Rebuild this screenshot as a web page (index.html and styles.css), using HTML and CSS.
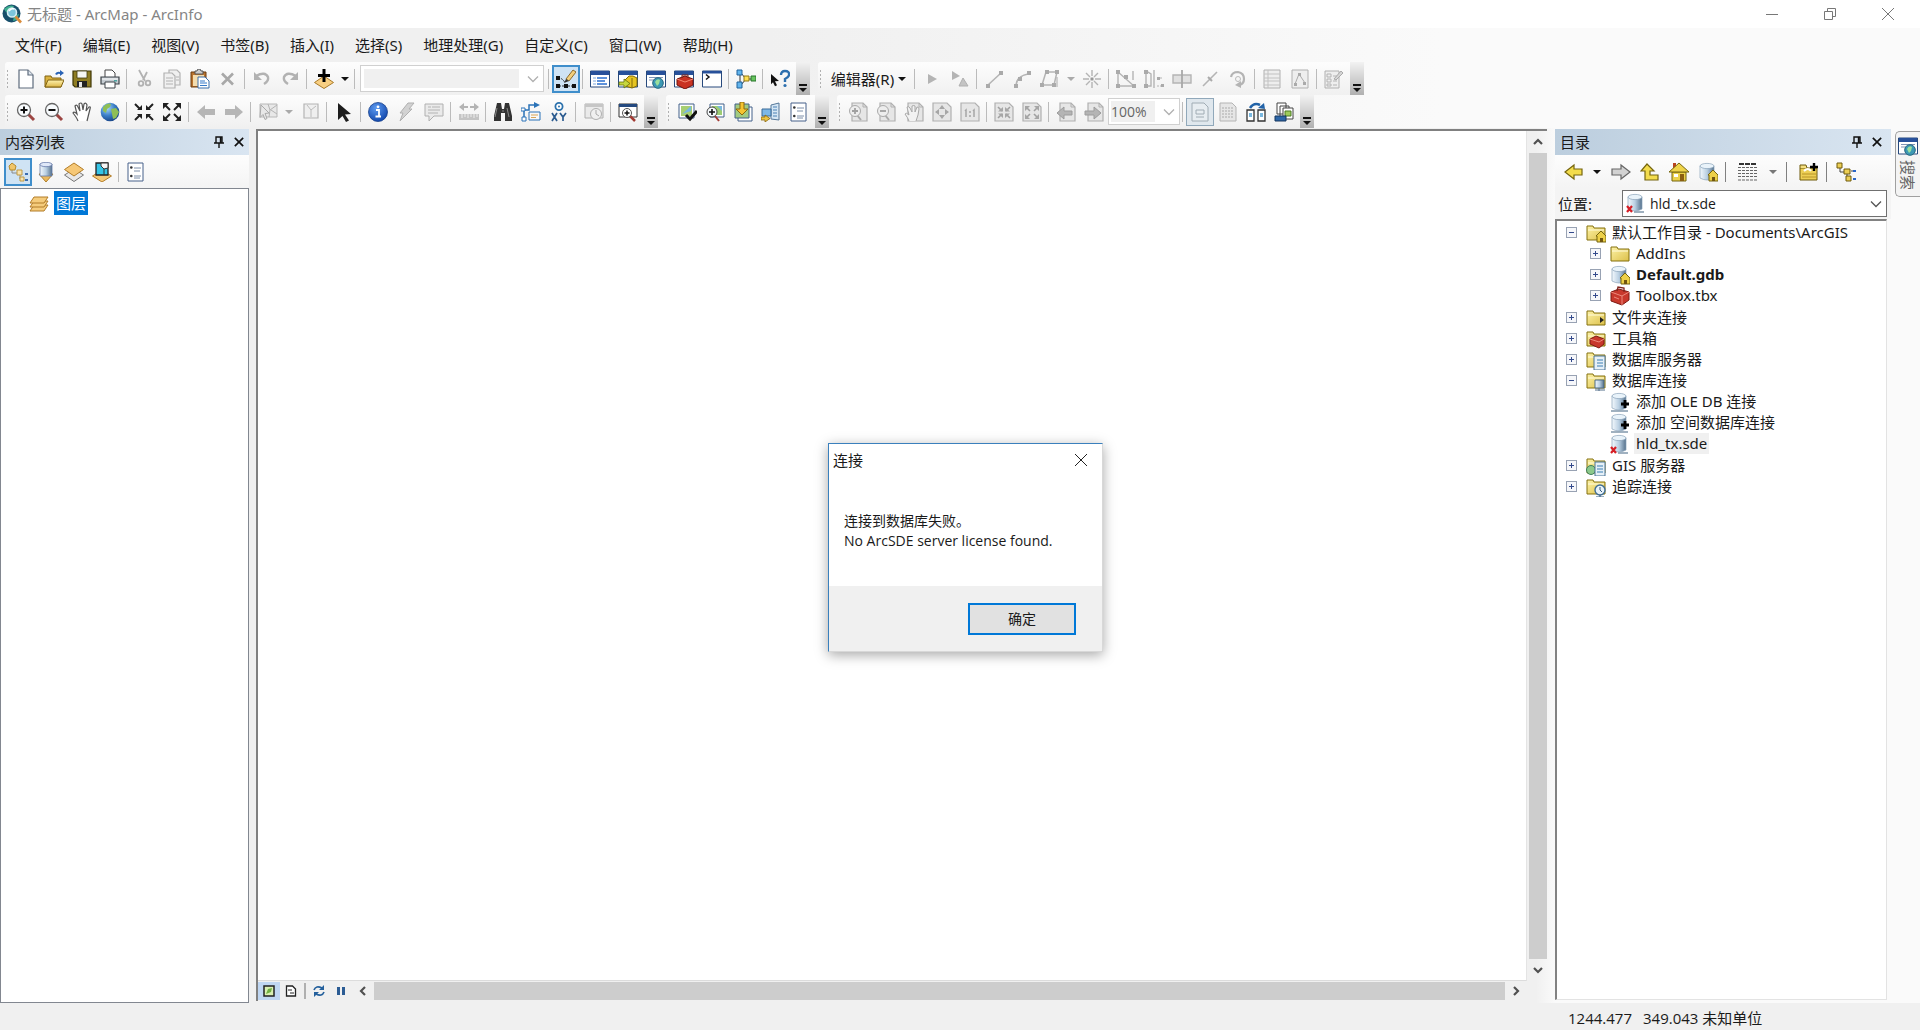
FILE: index.html
```html
<!DOCTYPE html>
<html lang="zh-CN">
<head>
<meta charset="utf-8">
<title>无标题 - ArcMap - ArcInfo</title>
<link rel="stylesheet" href="styles.css">
</head>
<body>
<svg class="sprite" aria-hidden="true">
  <defs>
    <linearGradient id="g-cyl" x1="0" x2="1" y1="0" y2="0"><stop offset="0" stop-color="#f4f9fd"/><stop offset=".5" stop-color="#b9cfe2"/><stop offset="1" stop-color="#55718c"/></linearGradient>
    <linearGradient id="g-fold" x1="0" x2="0" y1="0" y2="1"><stop offset="0" stop-color="#fff3b0"/><stop offset="1" stop-color="#dcb545"/></linearGradient>
    <linearGradient id="g-folder" x1="0" x2="1" y1="0" y2="1"><stop offset="0" stop-color="#fdf2a6"/><stop offset="1" stop-color="#dcc04a"/></linearGradient>
    <radialGradient id="g-globe" cx=".35" cy=".3" r=".8"><stop offset="0" stop-color="#a9d8f8"/><stop offset=".5" stop-color="#3b7fc8"/><stop offset="1" stop-color="#123a7c"/></radialGradient>
    <radialGradient id="g-info" cx=".4" cy=".3" r=".8"><stop offset="0" stop-color="#5c9af0"/><stop offset="1" stop-color="#0a3fa6"/></radialGradient>
  </defs>
  <symbol id="app" viewBox="0 0 20 20"><circle cx="9.500" cy="9.500" r="9" fill="#174f6b"/><path d="M2 5q5-5 10-3l-3 5-5 1zM12 12l5-2-2 6-4 1z" fill="#3fae8e"/><circle cx="10" cy="8.500" r="4.500" fill="#7cc6dc" stroke="#d4eef4" stroke-width="1.600"/><path d="M7 7q2-3 5-2" stroke="#fff" stroke-width="1.500" fill="none"/><path d="M13.500 12.500l5.500 6" stroke="#d98b3a" stroke-width="2.600"/></symbol>
  <symbol id="new" viewBox="0 0 20 20"><path d="M3 1h9l5 5v13H3z" fill="#fff" stroke="#5d6b7c" stroke-width="1.200"/><path d="M12 1v5h5" fill="#dfe6ee" stroke="#5d6b7c" stroke-width="1.200"/></symbol>
  <symbol id="open" viewBox="0 0 20 20"><path d="M1 18V7h6l1 2h9v9z" fill="#d9b13f" stroke="#806212"/><path d="M1 18l3-7h16l-3 7z" fill="url(#g-fold)" stroke="#806212"/><path d="M11 5q2-3 5-2V1l4 3-4 3V5q-2-1-3 1z" fill="#2a63b5"/></symbol>
  <symbol id="save" viewBox="0 0 20 20"><path d="M1 2h18v16H3l-2-2z" fill="#8f7d22" stroke="#3f3708" stroke-width="1.200"/><path d="M5 2h10v7H5z" fill="#f6f6f2" stroke="#3f3708" stroke-width=".8"/><path d="M5 12h10v6H5z" fill="#222"/><path d="M7 13h3v5H7z" fill="#e6e6e6"/></symbol>
  <symbol id="print" viewBox="0 0 20 20"><path d="M5 8V1h7l3 3v4" fill="#fff" stroke="#444"/><path d="M1 8h18v7H1z" fill="#c5ccd2" stroke="#3d4348" stroke-width="1.200"/><path d="M2 10h16" stroke="#fff"/><path d="M5 13h10v6H5z" fill="#fff" stroke="#3d4348"/><path d="M14 11h3v1.500h-3z" fill="#4aa3a0"/></symbol>
  <symbol id="cut" viewBox="0 0 20 20"><g fill="none" stroke="#b2b2b2" stroke-width="1.800"><path d="M5 1l6 11M13 3L9 11"/><circle cx="7" cy="14.500" r="2.300"/><circle cx="14" cy="14" r="2.300"/></g></symbol>
  <symbol id="copy" viewBox="0 0 20 20"><g fill="#f0f0f0" stroke="#b2b2b2" stroke-width="1.200"><path d="M7 1h8l3 3v12H7z"/><path d="M2 4h8l3 3v12H2z"/></g><path d="M4 9h7M4 12h7M4 15h7M14 8h3M14 11h3" stroke="#b2b2b2"/></symbol>
  <symbol id="paste" viewBox="0 0 20 20"><path d="M1 3h15v15H1z" fill="#b9732e" stroke="#6b3c10"/><path d="M3 6h11v11H3z" fill="#f3dcae"/><path d="M5 5V2h2l1-2h2l1 2h2v3z" fill="#ccc" stroke="#555"/><path d="M8 8h7l4 4v7H8z" fill="#fff" stroke="#3d6ea8"/><path d="M10 12h5M10 14h7M10 16.500h7" stroke="#3579c8"/></symbol>
  <symbol id="delete" viewBox="0 0 20 20"><path d="M4 4.500l11 11M15 4.500l-11 11" stroke="#a8a8a8" stroke-width="2.600"/></symbol>
  <symbol id="undo" viewBox="0 0 20 20"><path d="M4 7q9-5 12 1 1 4-4 7" fill="none" stroke="#b2b2b2" stroke-width="2.400"/><path d="M2 3v8h8z" fill="#b2b2b2"/></symbol>
  <symbol id="redo" viewBox="0 0 20 20"><path d="M16 7Q7 2 4 8q-1 4 4 7" fill="none" stroke="#b2b2b2" stroke-width="2.400"/><path d="M18 3v8h-8z" fill="#b2b2b2"/></symbol>
  <symbol id="add" viewBox="0 0 20 20"><path d="M10 7l9.500 6.500-9.500 6-9.500-6z" fill="#f8cf82" stroke="#a97a2a"/><path d="M10 0v13M4 6.500h12" stroke="#000" stroke-width="3"/></symbol>
  <symbol id="edittool" viewBox="0 0 20 20"><path d="M2 9q5 0 7 5M3 17h14" stroke="#333" fill="none" stroke-dasharray="2 1"/><path d="M0 7h4v4H0zM0 15h4v4H0zM8 15h4v4H8zM16 15h4v4h-4z" fill="#111"/><path d="M10 10L17 1l3 2-7 9z" fill="#f2cf7c" stroke="#8b6a2c"/><path d="M8 14l2-4 3 2z" fill="#333"/></symbol>
  <symbol id="win" viewBox="0 0 20 20"><path d="M.5 2h19v16H.5z" fill="#fff" stroke="#27497c"/><path d="M1 2h18v4H1z" fill="#27509a"/></symbol>
  <symbol id="toc" viewBox="0 0 20 20"><use href="#win"/><path d="M3 9h3M3 12h3M3 15h3" stroke="#7aa6dc"/><path d="M7 9h10M7 12h8M7 15h10" stroke="#2a6fd0" stroke-width="1.600"/></symbol>
  <symbol id="catalog" viewBox="0 0 20 20"><use href="#win"/><path d="M11 7h4l4 2v8l-5 2-7-2v-6z" fill="#e6c522" stroke="#826b08"/><path d="M14 9v10" stroke="#826b08"/><path d="M1 13h5v-3l6 4.500L6 19v-3H1z" fill="#c7d73f" stroke="#66720d" stroke-width=".8"/></symbol>
  <symbol id="search" viewBox="0 0 20 20"><use href="#win"/><path d="M3 8.500h14M3 11h5" stroke="#8095b5"/><circle cx="12" cy="14" r="5.300" fill="#3c98b4" stroke="#23667f"/><path d="M9 13q2-4 5-2l-1 4-2 2z" fill="#9adf9c"/></symbol>
  <symbol id="toolbox" viewBox="0 0 20 20"><use href="#win"/><path d="M3 10l8-3 8 3v6l-8 4-8-4z" fill="#c93222" stroke="#6e120b"/><path d="M3 10l8 3 8-3" stroke="#f48a72" fill="none"/><path d="M8 9V6h6v3" fill="none" stroke="#7d2015"/></symbol>
  <symbol id="python" viewBox="0 0 20 20"><path d="M.5 2h19v16H.5z" fill="#fff" stroke="#27497c"/><path d="M1 2h18v2.500H1z" fill="#27509a"/><path d="M4 5.500l3 2.500-3 2.500" stroke="#111" fill="none" stroke-width="1.500"/></symbol>
  <symbol id="model" viewBox="0 0 20 20"><path d="M4 4v12M5 4l5 6h6M5 16l5-6" stroke="#333" fill="none"/><path d="M1 1h5v5H1zM1 13h5v6H1z" fill="#62b5ed" stroke="#20639c"/><path d="M8 7h5v5H8z" fill="#ffdf52" stroke="#937810"/><path d="M15 7h5v5h-5z" fill="#69c45f" stroke="#27742a"/></symbol>
  <symbol id="help" viewBox="0 0 20 20"><path d="M1 5l8 7-4 .3 2 4-2 1-2-4-2 2z" fill="#111"/><path d="M11 6q0-4 4-4 4.500 0 4 4 0 2-4 4v3" fill="none" stroke="#2d6fae" stroke-width="2.400"/><circle cx="15" cy="16.500" r="1.600" fill="#2d6fae"/></symbol>
  <symbol id="e-arrow" viewBox="0 0 20 20"><path d="M6 5l9 5-9 5z" fill="#b4b4b4"/></symbol>
  <symbol id="e-arrowa" viewBox="0 0 20 20"><path d="M2 2l8 5-8 4z" fill="#b4b4b4"/><path d="M13 9l5 8H9z" fill="#c4c4c4" stroke="#b0b0b0"/></symbol>
  <symbol id="e-line" viewBox="0 0 20 20"><path d="M4 16L17 4" stroke="#b4b4b4" stroke-width="1.600"/><path d="M2 15h4v4H2zM15 2h4v4h-4z" fill="#aaa"/></symbol>
  <symbol id="e-arc" viewBox="0 0 20 20"><path d="M4 16q1-9 12-11" stroke="#b4b4b4" stroke-width="1.600" fill="none"/><path d="M2 15h4v4H2zM6 8h4v4H6zM15 2h4v4h-4z" fill="#aaa"/></symbol>
  <symbol id="e-trace" viewBox="0 0 20 20"><path d="M2 16L6 3h11l-3 13z" stroke="#b4b4b4" fill="none" stroke-width="1.500"/><path d="M0 14h4v4H0zM5 1h4v4H5zM15 1h4v4h-4zM12 14h4v4h-4z" fill="#aaa"/><path d="M17 8v10" stroke="#aaa"/></symbol>
  <symbol id="e-star" viewBox="0 0 20 20"><path d="M10 1v6M10 13v6M1 10h6M13 10h6M4 4l4 4M12 12l4 4M16 4l-4 4M8 12l-4 4" stroke="#b4b4b4" stroke-width="1.400"/><path d="M8.500 8.500h3v3h-3z" fill="#999"/></symbol>
  <symbol id="e-reshape" viewBox="0 0 20 20"><path d="M2 2v15h16L2 3M17 2v9" stroke="#b4b4b4" fill="none" stroke-width="1.400"/><path d="M0 1h4v4H0zM0 15h4v4H0zM16 15h4v4h-4zM8 6h4v4H8z" fill="#aaa"/></symbol>
  <symbol id="e-split" viewBox="0 0 20 20"><path d="M2 2v15h5V5zM10 1v18" stroke="#b4b4b4" fill="none" stroke-width="1.400"/><path d="M13 9h6M13 17h6" stroke="#b4b4b4" stroke-dasharray="2 1"/><path d="M0 1h4v4H0zM0 15h4v4H0zM13 8h3v3h-3zM17 15h3v3h-3z" fill="#aaa"/></symbol>
  <symbol id="e-cut" viewBox="0 0 20 20"><path d="M1 6h18v8H1z" fill="#e0e0e0" stroke="#b4b4b4" stroke-width="1.400"/><path d="M10 1v18" stroke="#a8a8a8" stroke-width="1.800"/></symbol>
  <symbol id="e-slice" viewBox="0 0 20 20"><path d="M3 17L17 3" stroke="#b4b4b4" stroke-width="1.600"/><path d="M8 8l4 4" stroke="#aaa" stroke-width="2"/></symbol>
  <symbol id="e-rotate" viewBox="0 0 20 20"><path d="M3 8q1-5 7-5 6 1 6 7 0 5-5 6" stroke="#b4b4b4" stroke-width="2.200" fill="none"/><circle cx="10" cy="10" r="2.500" fill="none" stroke="#bbb"/><path d="M13 12v7l-6-3z" fill="#b4b4b4"/></symbol>
  <symbol id="e-table" viewBox="0 0 20 20"><path d="M2 1h16v18H2z" fill="#eee" stroke="#b0b0b0"/><path d="M2 5h16M2 9h16M2 12h16M2 16h16M6 1v18" stroke="#c2c2c2"/></symbol>
  <symbol id="e-sketch" viewBox="0 0 20 20"><path d="M2 1h16v18H2z" fill="#eee" stroke="#b0b0b0"/><path d="M5 15L9 5l6 9" stroke="#aaa" fill="none"/><path d="M4 14h3v3H4zM8 4h3v3H8zM13 13h3v3h-3z" fill="#aaa"/></symbol>
  <symbol id="e-create" viewBox="0 0 20 20"><path d="M1 2h14v17H1z" fill="#eee" stroke="#b0b0b0"/><path d="M3 5h4v3H3zM3 10h4v3H3zM3 15h4v2H3zM9 7h4M9 12h4M9 16h4" stroke="#b4b4b4" fill="none"/><path d="M10 10L17 2l2 2-7 7z" fill="#d6d6d6" stroke="#aaa"/></symbol>
  <symbol id="zoomin" viewBox="0 0 20 20"><path d="M12 12l6 6" stroke="#9c4542" stroke-width="3"/><circle cx="8" cy="8" r="6.500" fill="#f8fbfd" stroke="#666" stroke-width="1.300"/><path d="M4.500 8h7M8 4.500v7" stroke="#111" stroke-width="2"/></symbol>
  <symbol id="zoomout" viewBox="0 0 20 20"><path d="M12 12l6 6" stroke="#9c4542" stroke-width="3"/><circle cx="8" cy="8" r="6.500" fill="#f8fbfd" stroke="#666" stroke-width="1.300"/><path d="M4.500 8h7" stroke="#111" stroke-width="2"/></symbol>
  <symbol id="pan" viewBox="0 0 20 20"><path d="M6 19q-1-3-5-8 1-2 4 1L3 4q2-2 3 1l2 4L7 2q2-2 3 0l1 6 1-6q2-2 3 1l-1 6 3-4q2-1 1 2l-2 8-1 4" fill="#fff" stroke="#555" stroke-width="1.200"/></symbol>
  <symbol id="globe" viewBox="0 0 20 20"><circle cx="10" cy="10" r="9.300" fill="url(#g-globe)"/><path d="M3 5q4-5 8-3l-1 3-3 2-1 4-3-2zM11 7l5-1 3 4-3 6-3 1-1-5z" fill="#8fbf55"/></symbol>
  <symbol id="in4" viewBox="0 0 20 20"><path d="M1 2l5 5M19 2l-5 5M1 18l5-5M19 18l-5-5" stroke="#222" stroke-width="2"/><path d="M8 3v5H3zM12 3v5h5zM8 17v-5H3zM12 17v-5h5z" fill="#222"/></symbol>
  <symbol id="out4" viewBox="0 0 20 20"><path d="M3 3l5 5M17 3l-5 5M3 17l5-5M17 17l-5-5" stroke="#222" stroke-width="2"/><path d="M1 1h6L1 7zM19 1h-6l6 6zM1 19h6l-6-6zM19 19h-6l6-6z" fill="#222"/></symbol>
  <symbol id="prev" viewBox="0 0 20 20"><path d="M1 10l8-7v4h10v6H9v4z" fill="#b6b6b6"/></symbol>
  <symbol id="next" viewBox="0 0 20 20"><path d="M19 10l-8-7v4H1v6h10v4z" fill="#b6b6b6"/></symbol>
  <symbol id="selfeat" viewBox="0 0 20 20"><path d="M2 2h17v13H2z" fill="#e8e8e8" stroke="#b8b8b8"/><path d="M10 2l2 6 7-5M12 8l-1 7M13 8l6 4" stroke="#b4b4b4" fill="none"/><path d="M3 3l8 8-4 .5 2 5-2 1-2-5-3 3z" fill="#e8e8e8" stroke="#aaa"/></symbol>
  <symbol id="clear" viewBox="0 0 20 20"><path d="M4 2h14v14H4z" fill="#efefef" stroke="#b4b4b4" stroke-width="1.200"/><path d="M7 3l4 5 5-4M11 8v7" stroke="#bcbcbc" fill="none"/></symbol>
  <symbol id="pointer" viewBox="0 0 20 20"><path d="M4 1l13 11-6 .5 4 6-3 1.500-3.500-6L4 18z" fill="#1d1d1d"/></symbol>
  <symbol id="info" viewBox="0 0 20 20"><circle cx="10" cy="10" r="9.500" fill="url(#g-info)" stroke="#17408c" stroke-width=".8"/><path d="M8 8h3v6M7.500 14.500h5.500" stroke="#fff" stroke-width="1.800" fill="none"/><circle cx="10" cy="4.800" r="1.400" fill="#fff"/></symbol>
  <symbol id="bolt" viewBox="0 0 20 20"><path d="M12 1h6l-5 6h3L4 19l3-8H4z" fill="#d2d2d2" stroke="#b0b0b0"/></symbol>
  <symbol id="popup" viewBox="0 0 20 20"><path d="M1 2h18v12h-9l-5 5v-5H1z" fill="#eaeaea" stroke="#b0b0b0"/><path d="M4 5h3M8 5h8M4 8h12M4 11h10" stroke="#b4b4b4"/></symbol>
  <symbol id="measure" viewBox="0 0 20 20"><path d="M1 5h18" stroke="#b4b4b4" stroke-width="2" stroke-dasharray="8 2"/><path d="M0 5l5-4v8zM20 5l-5-4v8z" fill="#b4b4b4"/><path d="M0 12h20v6H0z" fill="#c4c4c4"/><path d="M3 12v4M6 12v3M9 12v4M12 12v3M15 12v4M18 12v3" stroke="#eee"/></symbol>
  <symbol id="find" viewBox="0 0 20 20"><path d="M4 1h4l1 6h2l1-6h4l3 13v5h-7v-8H8v8H1v-5z" fill="#333"/><path d="M4 6L2 15M14 6l2 9M9 9h2" stroke="#888"/></symbol>
  <symbol id="route" viewBox="0 0 20 20"><path d="M3 17V8h5V3h8" fill="none" stroke="#2b73b8" stroke-width="1.500"/><path d="M13 0l6 3-6 3z" fill="#2b73b8"/><path d="M0 6h4v3H0zM1 15h4v4H1z" fill="#fff" stroke="#2b73b8"/><path d="M8 10h11v8H8z" fill="#f8f8f8" stroke="#2b73b8"/><path d="M10 13h7M10 15.500h5" stroke="#d8a556"/></symbol>
  <symbol id="xy" viewBox="0 0 20 20"><circle cx="10" cy="4.500" r="3.600" fill="#fff" stroke="#2c72ad" stroke-width="1.800"/><circle cx="10" cy="4.500" r="1" fill="#2c72ad"/><path d="M3 11l5 8M8 11l-5 8M11 11l3 4 3-4M14 15v4" stroke="#2c5c90" stroke-width="1.700" fill="none"/></symbol>
  <symbol id="time" viewBox="0 0 20 20"><path d="M1 2h18v14H1z" fill="#eaeaea" stroke="#b0b0b0"/><path d="M1 2h18v3H1z" fill="#c6c6c6"/><circle cx="12" cy="12" r="5.500" fill="#f0f0f0" stroke="#b0b0b0"/><path d="M12 8v4l3 2" stroke="#aaa" fill="none"/></symbol>
  <symbol id="viewer" viewBox="0 0 20 20"><path d="M1 2h18v13H1z" fill="#fff" stroke="#333"/><path d="M1 2h18v3H1z" fill="#24497f"/><path d="M12 14l5 5" stroke="#a33a33" stroke-width="2.500"/><circle cx="9" cy="11" r="4.500" fill="#fff" stroke="#555"/><path d="M6.500 11h5M9 8.500v5" stroke="#111" stroke-width="1.500"/></symbol>
  <symbol id="mapchk" viewBox="0 0 20 20"><path d="M2 2h15v14H2z" fill="#fff" stroke="#42608a"/><path d="M4 4h11v10H4z" fill="#a7cf73"/><path d="M5 12l9-8v5z" fill="#79b8e0"/><path d="M9 13l4 4 7-8" stroke="#111" stroke-width="3" fill="none"/></symbol>
  <symbol id="mapzoom" viewBox="0 0 20 20"><path d="M5 2h14v13H5z" fill="#fff" stroke="#42608a"/><path d="M7 4h10v9H7z" fill="#9ccc74"/><path d="M12 4h5v5z" fill="#79b8e0"/><path d="M10 14l4 5" stroke="#a33a33" stroke-width="2"/><circle cx="7" cy="10" r="5" fill="#f6fafc" stroke="#444"/><path d="M4 10h6M7 7v6" stroke="#111" stroke-width="1.600"/></symbol>
  <symbol id="mapimp" viewBox="0 0 20 20"><path d="M5 5h14v14H5z" fill="#fff" stroke="#42608a"/><path d="M2 2h14v14H2z" fill="#a2cb80" stroke="#42608a"/><path d="M7 0h4v7h4l-6 6-6-6h4z" fill="#f6c431" stroke="#8a680d"/></symbol>
  <symbol id="mapsrv" viewBox="0 0 20 20"><path d="M10 3l8-2v17l-8-1z" fill="#d5e6f4" stroke="#557799"/><path d="M12 5h4M12 8h4M12 11h4M12 14h4" stroke="#4a81b5"/><path d="M1 7h9v7H1z" fill="#7eb8e6" stroke="#3a6a97"/><path d="M0 15h4v-2l5 3.500L4 20v-2H0z" fill="#edc443" stroke="#8a680d" stroke-width=".8"/></symbol>
  <symbol id="list" viewBox="0 0 20 20"><path d="M2 1h15v18H2z" fill="#fff" stroke="#46618a"/><path d="M8 6h7M8 9h6M8 14h7M8 16h6" stroke="#7c8ea8"/><circle cx="5.300" cy="5.500" r="1.300" fill="#333"/><circle cx="5.300" cy="14" r="1.300" fill="#333"/></symbol>
  <symbol id="pg" viewBox="0 0 20 20"><path d="M4 1h11l4 4v14H4z" fill="#e6e6e6" stroke="#b0b0b0" stroke-width="1.200"/><path d="M15 1v4h4" fill="none" stroke="#b0b0b0"/></symbol>
  <symbol id="pgin" viewBox="0 0 20 20"><use href="#pg"/><path d="M9 13l4 5" stroke="#aaa" stroke-width="2"/><circle cx="7" cy="9" r="5.500" fill="#ededed" stroke="#aaa"/><path d="M4 9h6M7 6v6" stroke="#a0a0a0" stroke-width="1.800"/></symbol>
  <symbol id="pgout" viewBox="0 0 20 20"><use href="#pg"/><path d="M9 13l4 5" stroke="#aaa" stroke-width="2"/><circle cx="7" cy="9" r="5.500" fill="#ededed" stroke="#aaa"/><path d="M4 9h6" stroke="#a0a0a0" stroke-width="1.800"/></symbol>
  <symbol id="pgpan" viewBox="0 0 20 20"><use href="#pg"/><path d="M5 19q-1-3-4-7 1-2 4 1L3 5q2-1 3 1l2 4V4q2-1 3 0v6l2-5q2 0 2 2l-1 6-2 6" fill="#f2f2f2" stroke="#a8a8a8"/></symbol>
  <symbol id="pgfull" viewBox="0 0 20 20"><path d="M1 1h14l4 4v14H1z" fill="#e6e6e6" stroke="#b0b0b0" stroke-width="1.200"/><path d="M10 3l3 4H7zM10 17l3-4H7zM3 10l4-3v6zM17 10l-4-3v6z" fill="#a6a6a6"/></symbol>
  <symbol id="pg11" viewBox="0 0 20 20"><path d="M1 1h14l4 4v14H1z" fill="#e6e6e6" stroke="#b0b0b0" stroke-width="1.200"/><path d="M5 9l1-1v7M13 9l1-1v7M10 9v2M10 13v2" stroke="#a6a6a6" stroke-width="1.500" fill="none"/></symbol>
  <symbol id="pgin4" viewBox="0 0 20 20"><path d="M1 1h14l4 4v14H1z" fill="#e6e6e6" stroke="#b0b0b0" stroke-width="1.200"/><path d="M4 5l4 4M16 5l-4 4M4 16l4-4M16 16l-4-4" stroke="#a0a0a0" stroke-width="1.600"/><path d="M9 5v4.500H4zM11 5v4.500h5zM9 16v-4.500H4zM11 16v-4.500h5z" fill="#a6a6a6"/></symbol>
  <symbol id="pgout4" viewBox="0 0 20 20"><path d="M1 1h14l4 4v14H1z" fill="#e6e6e6" stroke="#b0b0b0" stroke-width="1.200"/><path d="M4 5l4 4M16 5l-4 4M4 16l4-4M16 16l-4-4" stroke="#a0a0a0" stroke-width="1.600"/><path d="M3 4h5L3 9zM17 4h-5l5 5zM3 17h5l-5-5zM17 17h-5l5-5z" fill="#a6a6a6"/></symbol>
  <symbol id="pgprev" viewBox="0 0 20 20"><use href="#pg"/><path d="M1 11l7-6v4h8v4H8v4z" fill="#b4b4b4" stroke="#9c9c9c"/></symbol>
  <symbol id="pgnext" viewBox="0 0 20 20"><use href="#pg"/><path d="M17 11l-7-6v4H1v4h9v4z" fill="#b4b4b4" stroke="#9c9c9c"/></symbol>
  <symbol id="draft" viewBox="0 0 20 20"><path d="M2 1h12l4 4v14H2z" fill="#e7edf1" stroke="#a0acb4"/><path d="M6 8h8v4H6zM6 15h8" fill="none" stroke="#a0acb4"/></symbol>
  <symbol id="focus" viewBox="0 0 20 20"><path d="M2 1h12l4 4v14H2z" fill="#e6e6e6" stroke="#b4b4b4"/><path d="M4 6h12M4 9h12M4 12h12M4 15h12" stroke="#aaa" stroke-dasharray="2 1"/></symbol>
  <symbol id="layout" viewBox="0 0 20 20"><path d="M1 8h7v11H1zM12 8h7v11h-7z" fill="#fff" stroke="#333" stroke-width="1.300"/><path d="M3 11h3v4H3zM14 11h3v4h-3z" fill="#79b8e0"/><path d="M4 6q4-6 10-3" fill="none" stroke="#2263a8" stroke-width="2.600"/><path d="M12 6l7 1-1-6z" fill="#2263a8"/></symbol>
  <symbol id="pages" viewBox="0 0 20 20"><path d="M3 1h9v11H3zM6 4h9v11H6z" fill="#fff" stroke="#444"/><path d="M9 6h10v11H9z" fill="#fff" stroke="#444"/><path d="M11 9h6v5h-6z" fill="#9ecb5b" stroke="#4a7a21"/><path d="M1 14h11v5H1z" fill="#2d66a8" stroke="#17365e"/></symbol>
  <symbol id="pin" viewBox="0 0 12 12"><path d="M3 7V1h6v6M7.500 1v6M1 7h10M6 7v5" stroke="#111" stroke-width="1.400" fill="none"/></symbol>
  <symbol id="x" viewBox="0 0 12 12"><path d="M1 1l10 10M11 1L1 11" stroke="#111" stroke-width="2"/></symbol>
  <symbol id="drawing" viewBox="0 0 20 20"><path d="M4 5v6h6M12 11v6h4" stroke="#8a8a8a" fill="none"/><path d="M4 1l4 3-1 4H2L1 4z" fill="#f0c56a" stroke="#b58a2d"/><path d="M9 8h5v5H9zM12 15h4v4h-4z" fill="#f7e3ae" stroke="#c19a45"/><path d="M17 11h3v2h-3zM17 17h3v2h-3z" fill="#3b6db0"/></symbol>
  <symbol id="source" viewBox="0 0 20 20"><path d="M3 12h14l-7 8z" fill="#eab85e" stroke="#b0802a"/><path d="M4 2h12v12H4z" fill="url(#g-cyl)" stroke="#667ba8" stroke-width=".8"/><ellipse cx="10" cy="2.500" rx="6" ry="2.200" fill="#dfe8f8" stroke="#6679a8" stroke-width=".8"/></symbol>
  <symbol id="visible" viewBox="0 0 20 20"><path d="M10 7l9.500 6-9.500 6.500L.5 13z" fill="#e8e8e8" stroke="#777"/><path d="M10 1l9.500 6.500L10 14 .5 7.500z" fill="#f6c877" stroke="#b27d28"/></symbol>
  <symbol id="selection" viewBox="0 0 20 20"><path d="M10 8l9.500 6-9.500 6L.5 14z" fill="#f6c877" stroke="#b27d28"/><path d="M4 1h12v12H4z" fill="#35c4e6" stroke="#222" stroke-width="1.300"/><path d="M9 1h7v5l-4 1-3-3z" fill="#f5f5f5" stroke="#333"/><path d="M12 7v6" stroke="#333"/></symbol>
  <symbol id="layers" viewBox="0 0 20 20"><g fill="#f5cc7c" stroke="#b27d28"><path d="M5 12h14l-4 6H1z"/><path d="M5 8h14l-4 6H1z"/><path d="M5 4h14l-4 6H1z"/></g></symbol>
  <symbol id="back" viewBox="0 0 20 20"><path d="M1 10l9-7v4h8v6h-8v4z" fill="#f3dc4c" stroke="#75650e" stroke-width="1.200"/></symbol>
  <symbol id="fwd" viewBox="0 0 20 20"><path d="M19 10l-9-7v4H1v6h9v4z" fill="#d2d2d2" stroke="#666" stroke-width="1.200"/></symbol>
  <symbol id="up" viewBox="0 0 20 20"><path d="M7 2l7 7h-4v4h8v5H5V9H1z" fill="#f3dc4c" stroke="#75650e" stroke-width="1.200"/></symbol>
  <symbol id="home" viewBox="0 0 20 20"><path d="M3 10h14v9H3z" fill="#ecd24a" stroke="#75650e"/><path d="M4 1h3v6H4z" fill="#b8431f"/><path d="M10 1l10 9H0z" fill="#efd44a" stroke="#75650e"/><path d="M11 12h4v7h-4z" fill="#8a5f12"/><path d="M5 12h4v3H5z" fill="#fff"/></symbol>
  <symbol id="db" viewBox="0 0 20 20"><path d="M2 4v12q7 4 14 0V4z" fill="url(#g-cyl)" stroke="#8ba3ba" stroke-width=".7"/><ellipse cx="9" cy="4" rx="7" ry="2.600" fill="#e9f3fa" stroke="#8ba3ba" stroke-width=".7"/></symbol>
  <symbol id="minihome" viewBox="0 0 20 20"><path d="M10 13l5-5 5 5v6h-9v-6z" fill="#edd047" stroke="#75650e"/><path d="M14 15h3v4h-3z" fill="#71560f"/></symbol>
  <symbol id="gdb" viewBox="0 0 20 20"><use href="#db"/><use href="#minihome"/></symbol>
  <symbol id="details" viewBox="0 0 20 20"><path d="M1 2h18" stroke="#333" stroke-width="2" stroke-dasharray="5 1"/><path d="M0 5.500h20M0 8.500h20M0 11.500h20M0 14.500h20M0 18h20" stroke="#666" stroke-dasharray="3 1"/></symbol>
  <symbol id="connect" viewBox="0 0 20 20"><path d="M1 6h17v12H1z" fill="#edcf55" stroke="#6e5a0c"/><path d="M1 6V3h6l1 3" fill="#f5df80" stroke="#6e5a0c"/><path d="M5 9q4-4 7 0" fill="none" stroke="#fff" stroke-width="2"/><path d="M3 12h14M3 15h14" stroke="#b89428"/><path d="M15 1v8M11 5h8" stroke="#000" stroke-width="2.400"/></symbol>
  <symbol id="treeview" viewBox="0 0 20 20"><path d="M4 5v5h6M11 10v7h4M15 9h2" stroke="#444" fill="none"/><path d="M1 1h5v5H1zM8 7h6v5H8zM10 14h5v5h-5z" fill="#edcf55" stroke="#6e5a0c"/><path d="M17 8h3v2h-3zM17 16h3v2h-3z" fill="#2a66c8"/></symbol>
  <symbol id="folder" viewBox="0 0 20 20"><path d="M1 17V3h6l1 2h11v12z" fill="url(#g-folder)" stroke="#84700f"/><path d="M2 7h16" stroke="#fffbdc"/></symbol>
  <symbol id="f-home" viewBox="0 0 20 20"><use href="#folder"/><use href="#minihome"/></symbol>
  <symbol id="f-link" viewBox="0 0 20 20"><use href="#folder"/><path d="M14 9l4 3-4 3z" fill="#222"/></symbol>
  <symbol id="box" viewBox="0 0 20 20"><path d="M1 6l8-3 10 3v8l-7 5-11-4z" fill="#c8382c" stroke="#7d1a12"/><path d="M1 6l11 4 7-4M12 10v9M4 11l5 2" stroke="#ec8a7d" fill="none"/><path d="M7 5l1-4 6 1v4" stroke="#80241c" fill="none" stroke-width="1.300"/></symbol>
  <symbol id="f-box" viewBox="0 0 20 20"><use href="#folder"/><path d="M4 10l6-3 8 3v5l-5 4-9-4z" fill="#c8382c" stroke="#7d1a12"/><path d="M4 10l9 3 5-3" stroke="#ec8a7d" fill="none"/></symbol>
  <symbol id="f-srv" viewBox="0 0 20 20"><use href="#folder"/><path d="M8 6h11v14H8z" fill="#e6f0f7" stroke="#4b7596"/><path d="M11 10h6M11 13h6M11 16h6" stroke="#3a7eb3"/></symbol>
  <symbol id="f-db" viewBox="0 0 20 20"><use href="#folder"/><path d="M9 9h9v8H9z" fill="url(#g-cyl)" stroke="#4b6a86"/><path d="M13 17v3M9 19h10" stroke="#54708c"/></symbol>
  <symbol id="dbadd" viewBox="0 0 20 20"><use href="#db"/><path d="M1 19h17" stroke="#8197ab" stroke-width="1.500"/><path d="M15 8v8M11 12h8" stroke="#000" stroke-width="2.800"/></symbol>
  <symbol id="dbx" viewBox="0 0 20 20"><use href="#db"/><path d="M8 19h10" stroke="#8197ab" stroke-width="1.500"/><path d="M1 13l5 6M6 13l-5 6" stroke="#d61f26" stroke-width="2.200"/></symbol>
  <symbol id="f-gis" viewBox="0 0 20 20"><use href="#folder"/><circle cx="5" cy="14" r="4.500" fill="#8dc98b" stroke="#3f7f5c"/><path d="M9 6h10v14H9z" fill="#e6f0f7" stroke="#4b7596"/><path d="M11 10h6M11 13h6M11 16h6" stroke="#3a7eb3"/></symbol>
  <symbol id="f-track" viewBox="0 0 20 20"><use href="#folder"/><circle cx="14" cy="13" r="5" fill="#e8f2fa" stroke="#3f6d94" stroke-width="1.400"/><path d="M14 10v3l2 2M14 18v2M10 20h8" stroke="#335a7c" fill="none"/></symbol>
  <symbol id="chev" viewBox="0 0 12 12"><path d="M1 3.500l5 5 5-5" stroke="currentColor" stroke-width="1.300" fill="none"/></symbol>
  <symbol id="arr" viewBox="0 0 12 12"><path d="M2 4l4 4 4-4" stroke="#505050" stroke-width="2.200" fill="none"/></symbol>
  <symbol id="dataview" viewBox="0 0 12 12"><path d="M1 1h10v10H1z" fill="#d9efb2" stroke="#222" stroke-width="1.500"/><path d="M3 9l2-5 4-1-1 4z" fill="#70b042"/></symbol>
  <symbol id="layoutview" viewBox="0 0 12 12"><path d="M1.500 1h6l3 3v7h-9z" fill="#fff" stroke="#222" stroke-width="1.300"/><path d="M3 5h4M5 8h4" stroke="#222"/></symbol>
  <symbol id="refresh" viewBox="0 0 12 12"><path d="M1 5q2-5 8-2M11 7q-2 5-8 2" stroke="#24609c" stroke-width="1.700" fill="none"/><path d="M11 0v5H6zM1 12V7h5z" fill="#24609c"/></symbol>
  <symbol id="pause" viewBox="0 0 12 12"><path d="M2 2h3v8H2zM7 2h3v8H7z" fill="#2b5c94"/></symbol>
</svg>

<header class="titlebar">
  <svg class="i20"><use href="#app"/></svg>
  <h1>无标题 - ArcMap - ArcInfo</h1>
  <div class="winbtns">
    <button aria-label="最小化"><svg viewBox="0 0 12 12"><path d="M0 6.500h12"/></svg></button>
    <button aria-label="还原"><svg viewBox="0 0 12 12"><path d="M.5 3.500h8v8h-8zM3.500 3V.5h8v8H9"/></svg></button>
    <button aria-label="关闭"><svg viewBox="0 0 12 12"><path d="M0 0l12 12M12 0L0 12"/></svg></button>
  </div>
</header>

<nav class="menubar">
  <button>文件(F)</button><button>编辑(E)</button><button>视图(V)</button><button>书签(B)</button><button>插入(I)</button><button>选择(S)</button><button>地理处理(G)</button><button>自定义(C)</button><button>窗口(W)</button><button>帮助(H)</button>
</nav>

<div class="barrow">
  <div class="bar" role="toolbar" aria-label="标准工具">
    <i class="grip"></i>
    <button class="tool" aria-label="新建"><svg><use href="#new"/></svg></button>
    <button class="tool" aria-label="打开"><svg><use href="#open"/></svg></button>
    <button class="tool" aria-label="保存"><svg><use href="#save"/></svg></button>
    <button class="tool" aria-label="打印"><svg><use href="#print"/></svg></button>
    <i class="sep"></i>
    <button class="tool" aria-label="剪切"><svg><use href="#cut"/></svg></button>
    <button class="tool" aria-label="复制"><svg><use href="#copy"/></svg></button>
    <button class="tool" aria-label="粘贴"><svg><use href="#paste"/></svg></button>
    <button class="tool" aria-label="删除"><svg><use href="#delete"/></svg></button>
    <i class="sep"></i>
    <button class="tool" aria-label="撤消"><svg><use href="#undo"/></svg></button>
    <button class="tool" aria-label="恢复"><svg><use href="#redo"/></svg></button>
    <i class="sep"></i>
    <button class="tool" aria-label="添加数据"><svg><use href="#add"/></svg></button>
    <button class="drop" aria-label="添加数据选项"><i class="tri"></i></button>
    <i class="sep"></i>
    <div class="combo scale"><select aria-label="比例尺" disabled><option></option></select><svg><use href="#chev"/></svg></div>
    <i class="sep"></i>
    <button class="tool on" aria-label="编辑器工具条"><svg><use href="#edittool"/></svg></button>
    <i class="sep"></i>
    <button class="tool" aria-label="内容列表"><svg><use href="#toc"/></svg></button>
    <button class="tool" aria-label="目录"><svg><use href="#catalog"/></svg></button>
    <button class="tool" aria-label="搜索"><svg><use href="#search"/></svg></button>
    <button class="tool" aria-label="工具箱"><svg><use href="#toolbox"/></svg></button>
    <button class="tool" aria-label="Python"><svg><use href="#python"/></svg></button>
    <i class="sep"></i>
    <button class="tool" aria-label="模型构建器"><svg><use href="#model"/></svg></button>
    <i class="sep"></i>
    <button class="tool" aria-label="这是什么"><svg><use href="#help"/></svg></button>
    <button class="more" aria-label="更多"><i class="tri"></i></button>
  </div>
  <div class="bar" role="toolbar" aria-label="编辑器">
    <i class="grip"></i>
    <button class="editor">编辑器(R)<i class="tri"></i></button>
    <i class="sep"></i>
    <button class="tool" aria-label="编辑工具"><svg><use href="#e-arrow"/></svg></button>
    <button class="tool" aria-label="编辑注记"><svg><use href="#e-arrowa"/></svg></button>
    <i class="sep"></i>
    <button class="tool" aria-label="直线段"><svg><use href="#e-line"/></svg></button>
    <button class="tool" aria-label="弧线段"><svg><use href="#e-arc"/></svg></button>
    <button class="tool" aria-label="追踪"><svg><use href="#e-trace"/></svg></button>
    <button class="drop" aria-label="构造方法"><i class="tri off"></i></button>
    <button class="tool" aria-label="点"><svg><use href="#e-star"/></svg></button>
    <i class="sep"></i>
    <button class="tool" aria-label="编辑折点"><svg><use href="#e-reshape"/></svg></button>
    <button class="tool" aria-label="整形要素"><svg><use href="#e-split"/></svg></button>
    <button class="tool" aria-label="裁剪面"><svg><use href="#e-cut"/></svg></button>
    <button class="tool" aria-label="分割"><svg><use href="#e-slice"/></svg></button>
    <button class="tool" aria-label="旋转"><svg><use href="#e-rotate"/></svg></button>
    <i class="sep"></i>
    <button class="tool" aria-label="属性"><svg><use href="#e-table"/></svg></button>
    <button class="tool" aria-label="草图属性"><svg><use href="#e-sketch"/></svg></button>
    <i class="sep"></i>
    <button class="tool" aria-label="创建要素"><svg><use href="#e-create"/></svg></button>
    <button class="more" aria-label="更多"><i class="tri"></i></button>
  </div>
</div>

<div class="barrow">
  <div class="bar" role="toolbar" aria-label="工具">
    <i class="grip"></i>
    <button class="tool" aria-label="放大"><svg><use href="#zoomin"/></svg></button>
    <button class="tool" aria-label="缩小"><svg><use href="#zoomout"/></svg></button>
    <button class="tool" aria-label="平移"><svg><use href="#pan"/></svg></button>
    <button class="tool" aria-label="全图"><svg><use href="#globe"/></svg></button>
    <i class="sep"></i>
    <button class="tool" aria-label="固定比例放大"><svg><use href="#in4"/></svg></button>
    <button class="tool" aria-label="固定比例缩小"><svg><use href="#out4"/></svg></button>
    <i class="sep"></i>
    <button class="tool" aria-label="上一视图"><svg><use href="#prev"/></svg></button>
    <button class="tool" aria-label="下一视图"><svg><use href="#next"/></svg></button>
    <i class="sep"></i>
    <button class="tool" aria-label="选择要素"><svg><use href="#selfeat"/></svg></button>
    <button class="drop" aria-label="选择方式"><i class="tri off"></i></button>
    <button class="tool" aria-label="清除选择"><svg><use href="#clear"/></svg></button>
    <i class="sep"></i>
    <button class="tool" aria-label="选择元素"><svg><use href="#pointer"/></svg></button>
    <i class="sep"></i>
    <button class="tool" aria-label="识别"><svg><use href="#info"/></svg></button>
    <button class="tool" aria-label="超链接"><svg><use href="#bolt"/></svg></button>
    <button class="tool" aria-label="弹出窗口"><svg><use href="#popup"/></svg></button>
    <i class="sep roomy"></i>
    <button class="tool" aria-label="测量"><svg><use href="#measure"/></svg></button>
    <i class="sep"></i>
    <button class="tool" aria-label="查找"><svg><use href="#find"/></svg></button>
    <button class="tool" aria-label="查找路径"><svg><use href="#route"/></svg></button>
    <button class="tool" aria-label="转到 XY"><svg><use href="#xy"/></svg></button>
    <i class="sep roomy"></i>
    <button class="tool" aria-label="时间滑块"><svg><use href="#time"/></svg></button>
    <i class="sep"></i>
    <button class="tool" aria-label="查看器窗口"><svg><use href="#viewer"/></svg></button>
    <button class="more" aria-label="更多"><i class="tri"></i></button>
  </div>
  <div class="bar" role="toolbar" aria-label="地图服务">
    <i class="grip"></i>
    <button class="tool" aria-label="分析地图"><svg><use href="#mapchk"/></svg></button>
    <button class="tool" aria-label="预览"><svg><use href="#mapzoom"/></svg></button>
    <button class="tool" aria-label="保存服务"><svg><use href="#mapimp"/></svg></button>
    <button class="tool" aria-label="发布"><svg><use href="#mapsrv"/></svg></button>
    <button class="tool" aria-label="选项"><svg><use href="#list"/></svg></button>
    <button class="more" aria-label="更多"><i class="tri"></i></button>
  </div>
  <div class="bar" role="toolbar" aria-label="布局">
    <i class="grip"></i>
    <button class="tool" aria-label="页面放大"><svg><use href="#pgin"/></svg></button>
    <button class="tool" aria-label="页面缩小"><svg><use href="#pgout"/></svg></button>
    <button class="tool" aria-label="页面平移"><svg><use href="#pgpan"/></svg></button>
    <button class="tool" aria-label="整页"><svg><use href="#pgfull"/></svg></button>
    <button class="tool" aria-label="实际大小"><svg><use href="#pg11"/></svg></button>
    <i class="sep"></i>
    <button class="tool" aria-label="页面固定放大"><svg><use href="#pgin4"/></svg></button>
    <button class="tool" aria-label="页面固定缩小"><svg><use href="#pgout4"/></svg></button>
    <i class="sep"></i>
    <button class="tool" aria-label="上一范围"><svg><use href="#pgprev"/></svg></button>
    <button class="tool" aria-label="下一范围"><svg><use href="#pgnext"/></svg></button>
    <div class="combo percent"><select aria-label="页面比例" disabled><option>100%</option></select><svg><use href="#chev"/></svg></div>
    <i class="sep"></i>
    <button class="tool on dim" aria-label="草图模式"><svg><use href="#draft"/></svg></button>
    <button class="tool" aria-label="焦点数据框"><svg><use href="#focus"/></svg></button>
    <button class="tool" aria-label="更改布局"><svg><use href="#layout"/></svg></button>
    <button class="tool" aria-label="数据驱动页面"><svg><use href="#pages"/></svg></button>
    <button class="more" aria-label="更多"><i class="tri"></i></button>
  </div>
</div>

<main class="work">
  <section class="contents">
    <div class="panelhead"><h2>内容列表</h2><button aria-label="自动隐藏"><svg><use href="#pin"/></svg></button><button aria-label="关闭"><svg><use href="#x"/></svg></button></div>
    <div class="paneltools">
      <button class="tool on" aria-label="按绘制顺序列出"><svg><use href="#drawing"/></svg></button>
      <button class="tool" aria-label="按源列出"><svg><use href="#source"/></svg></button>
      <button class="tool" aria-label="按可见性列出"><svg><use href="#visible"/></svg></button>
      <button class="tool" aria-label="按选择列出"><svg><use href="#selection"/></svg></button>
      <i class="sep"></i>
      <button class="tool" aria-label="选项"><svg><use href="#list"/></svg></button>
    </div>
    <div class="layerlist"><div class="frame"><svg class="i20"><use href="#layers"/></svg><span>图层</span></div></div>
  </section>

  <section class="map" aria-label="地图">
    <div class="canvas"></div>
    <div class="vscroll"><button aria-label="向上"><svg class="up"><use href="#arr"/></svg></button><div class="thumb"></div><button aria-label="向下"><svg><use href="#arr"/></svg></button></div>
    <div class="mapfoot">
      <button class="view on" aria-label="数据视图"><svg><use href="#dataview"/></svg></button>
      <button class="view" aria-label="布局视图"><svg><use href="#layoutview"/></svg></button>
      <i class="line"></i>
      <button class="view" aria-label="刷新"><svg><use href="#refresh"/></svg></button>
      <button class="view" aria-label="暂停绘制"><svg><use href="#pause"/></svg></button>
      <button class="view" aria-label="向左"><svg class="left"><use href="#arr"/></svg></button>
      <div class="thumb"></div>
      <button class="view" aria-label="向右"><svg class="right"><use href="#arr"/></svg></button>
    </div>
  </section>

  <section class="catalog">
    <div class="panelhead"><h2>目录</h2><button aria-label="自动隐藏"><svg><use href="#pin"/></svg></button><button aria-label="关闭"><svg><use href="#x"/></svg></button></div>
    <div class="paneltools">
      <button class="tool" aria-label="后退"><svg><use href="#back"/></svg></button>
      <button class="drop history" aria-label="历史"><i class="tri"></i></button>
      <button class="tool" aria-label="前进"><svg><use href="#fwd"/></svg></button>
      <button class="tool" aria-label="上一级"><svg><use href="#up"/></svg></button>
      <button class="tool" aria-label="主目录"><svg><use href="#home"/></svg></button>
      <button class="tool" aria-label="默认地理数据库"><svg><use href="#gdb"/></svg></button>
      <i class="sep dark"></i>
      <button class="tool wide" aria-label="视图"><svg><use href="#details"/></svg></button>
      <button class="drop" aria-label="视图选项"><i class="tri mid"></i></button>
      <i class="sep dark wide"></i>
      <button class="tool" aria-label="连接到文件夹"><svg><use href="#connect"/></svg></button>
      <i class="sep dark"></i>
      <button class="tool" aria-label="切换目录树"><svg><use href="#treeview"/></svg></button>
    </div>
    <div class="location"><label for="loc">位置:</label><div class="combo"><svg class="i20 lead"><use href="#dbx"/></svg><select id="loc"><option>hld_tx.sde</option></select><svg><use href="#chev"/></svg></div></div>
    <ul class="tree">
      <li><div class="node"><button class="exp minus" aria-label="折叠"></button><svg class="i20"><use href="#f-home"/></svg><span>默认工作目录 - Documents\ArcGIS</span></div>
        <ul>
          <li><div class="node"><button class="exp" aria-label="展开"></button><svg class="i20"><use href="#folder"/></svg><span>AddIns</span></div></li>
          <li><div class="node"><button class="exp" aria-label="展开"></button><svg class="i20"><use href="#gdb"/></svg><span><b>Default.gdb</b></span></div></li>
          <li><div class="node"><button class="exp" aria-label="展开"></button><svg class="i20"><use href="#box"/></svg><span>Toolbox.tbx</span></div></li>
        </ul></li>
      <li><div class="node"><button class="exp" aria-label="展开"></button><svg class="i20"><use href="#f-link"/></svg><span>文件夹连接</span></div></li>
      <li><div class="node"><button class="exp" aria-label="展开"></button><svg class="i20"><use href="#f-box"/></svg><span>工具箱</span></div></li>
      <li><div class="node"><button class="exp" aria-label="展开"></button><svg class="i20"><use href="#f-srv"/></svg><span>数据库服务器</span></div></li>
      <li><div class="node"><button class="exp minus" aria-label="折叠"></button><svg class="i20"><use href="#f-db"/></svg><span>数据库连接</span></div>
        <ul>
          <li><div class="node leaf"><svg class="i20"><use href="#dbadd"/></svg><span>添加 OLE DB 连接</span></div></li>
          <li><div class="node leaf"><svg class="i20"><use href="#dbadd"/></svg><span>添加 空间数据库连接</span></div></li>
          <li><div class="node leaf current"><svg class="i20"><use href="#dbx"/></svg><span>hld_tx.sde</span></div></li>
        </ul></li>
      <li><div class="node"><button class="exp" aria-label="展开"></button><svg class="i20"><use href="#f-gis"/></svg><span>GIS 服务器</span></div></li>
      <li><div class="node"><button class="exp" aria-label="展开"></button><svg class="i20"><use href="#f-track"/></svg><span>追踪连接</span></div></li>
    </ul>
  </section>

  <aside class="dock"><button><svg class="i20"><use href="#search"/></svg><span>搜索</span></button></aside>
</main>

<footer class="status"><span>1244.477</span><span>349.043 未知单位</span></footer>

<div class="dialog" role="dialog" aria-labelledby="dlg-title">
  <div class="dlghead"><h2 id="dlg-title">连接</h2><button aria-label="关闭"><svg viewBox="0 0 12 12"><path d="M0 0l12 12M12 0L0 12"/></svg></button></div>
  <div class="dlgbody"><p>连接到数据库失败。</p><p>No ArcSDE server license found.</p></div>
  <div class="dlgfoot"><button>确定</button></div>
</div>
</body>
</html>
```
FILE: styles.css
```css
* { box-sizing: border-box; }
body {
  margin: 0;
  min-height: 100vh;
  display: flex;
  flex-direction: column;
  position: relative;
  overflow: hidden;
  background: linear-gradient(90deg, #f0f0f0 0, #f0f0f0 40%, #fafafa 75%, #fafafa 100%);
  color: #1a1a1a;
  font: 15px/20px "Noto Sans", "Noto Sans CJK SC", sans-serif;
}
button, select { font: inherit; color: inherit; margin: 0; padding: 0; border: 0; background: none; }
button { display: flex; align-items: center; justify-content: center; flex: none; }
h1, h2, p, ul { margin: 0; padding: 0; font: inherit; list-style: none; }
svg { display: block; flex: none; }
.sprite { position: absolute; width: 0; height: 0; }
.i20, .tool svg { width: 20px; height: 20px; }

/* title and menus */
.titlebar { height: 28px; display: flex; align-items: center; padding-left: 2px; gap: 5px; background: #fff; color: #858585; }
.winbtns { margin-left: auto; display: flex; padding-right: 3px; }
.winbtns button { width: 58px; height: 28px; }
.winbtns svg { width: 12px; height: 12px; overflow: visible; fill: none; stroke: #777; }
.menubar { height: 34px; display: flex; align-items: center; padding-left: 4px; }
.menubar button { padding: 0 10px 0 11px; height: 24px; }

/* toolbars */
.barrow { height: 33px; display: flex; gap: 8px; padding-left: 5px; }
.bar { display: flex; align-items: center; height: 33px; background: linear-gradient(#fdfdfd, #f0f0f0); border-radius: 3px; }
.grip { width: 7px; height: 20px; background: radial-gradient(circle, #b0b0b0 1px, transparent 1px) 0 0 / 5px 4px repeat-y; }
.tool { width: 28px; height: 28px; }
.tool.on { border: 2px solid #3f8ecb; background: #cfe3f4; }
.tool.on.dim { border: 1px solid #90a8ba; background: #dfe7ed; }
.sep { width: 6px; height: 20px; flex: none; background: linear-gradient(#bbb, #bbb) 2px 0 / 1px 100% no-repeat; }
.sep.roomy { width: 7px; }
.drop { width: 14px; height: 28px; }
.tri { width: 0; height: 0; border: 4px solid transparent; border-top: 4px solid #111; border-bottom: 0; }
.tri.off { border-top-color: #aaa; }
.tri.mid { border-top-color: #777; }
.more { width: 14px; height: 33px; margin-left: 2px; align-items: flex-end; padding-bottom: 3px; background: linear-gradient(#f2f2f2, #b0b0b0); }
.more .tri { position: relative; }
.more .tri::before { content: ""; position: absolute; left: -4px; top: -8px; width: 8px; height: 2px; background: #111; }
.editor { width: 87px; height: 28px; gap: 4px; }
.combo { position: relative; background: #fff; border: 1px solid #d0d0d0; }
.combo select { appearance: none; width: 100%; height: 100%; display: block; opacity: 1; }
.combo > svg:last-child { position: absolute; right: 4px; top: 50%; width: 12px; height: 12px; margin-top: -6px; color: #b0b0b0; pointer-events: none; }
.scale { width: 184px; height: 27px; margin: 0 2px; padding: 3px 24px 3px 3px; }
.scale select { background: #f0f0f0; }
.percent { width: 72px; height: 27px; padding: 2px 24px 2px 2px; }
.percent select { background: #f0f0f0; color: #666; font-size: 14px; font-family: "Open Sans", sans-serif; }

/* docked work area */
.work { flex: 1; display: grid; grid-template-columns: 249px minmax(0, 1fr) 336px 29px; padding-top: 1px; background: linear-gradient(90deg, #f0f0f0 0, #f0f0f0 80%, #fafafa 81%); }
.panelhead { height: 26px; display: flex; align-items: center; padding: 0 4px 0 5px; background: linear-gradient(90deg, #bccede, #d9e5f1); }
.panelhead h2 { flex: 1; }
.panelhead button { width: 20px; height: 20px; }
.panelhead svg { width: 12px; height: 12px; }
.panelhead button:last-child svg { width: 10px; height: 10px; }
.contents .panelhead { padding-right: 0; }
.paneltools { height: 33px; display: flex; align-items: center; padding-left: 4px; background: linear-gradient(#fdfdfd, #f4f4f4); }
.contents { display: flex; flex-direction: column; }
.layerlist { flex: 1; border: 1px solid #828790; background: #fff; padding: 2px 0 0 28px; }
.frame { display: flex; align-items: center; gap: 5px; }
.frame span { background: #0078d7; color: #fff; padding: 2px; line-height: 20px; }

.map { margin: 0 8px 2px 7px; display: grid; grid-template: minmax(0, 1fr) 20px / minmax(0, 1fr) 20px; border-left: 2px solid #808080; border-top: 2px solid #808080; }
.canvas { background: #fff; border-bottom: 1px solid #dcdcdc; border-right: 1px solid #e4e4e4; }
.vscroll { display: flex; flex-direction: column; padding-left: 2px; }
.vscroll button { height: 22px; width: 18px; }
.map svg { width: 12px; height: 12px; }
.map .up { transform: rotate(180deg); }
.map .left { transform: rotate(90deg); }
.map .right { transform: rotate(-90deg); }
.thumb { flex: 1; background: #cdcdcd; }
.mapfoot { grid-column: 1 / 3; display: flex; align-items: center; padding: 1px 20px 1px 0; }
.mapfoot .thumb { height: 18px; }
.view { width: 22px; height: 18px; }
.view.on { background: #bfd6f2; }
.line { width: 2px; height: 16px; margin: 0 2px; background: #b0b0b0; }

.catalog { display: flex; flex-direction: column; padding-bottom: 3px; }
.catalog .tool { width: 29px; }
.catalog .tool.wide { width: 36px; }
.catalog .drop.history { width: 18px; }
.catalog .sep.dark { width: 8px; background: linear-gradient(#808080, #808080) 3px 0 / 1px 100% no-repeat; }
.catalog .sep.wide { width: 14px; background-position: 6px 0; }
.location { height: 31px; display: flex; align-items: center; padding: 0 4px 0 3px; background: #f4f4f4; }
.location label { width: 64px; }
.location .combo { flex: 1; height: 27px; border-color: #707070; }
.location select { padding-left: 27px; font-size: 14px; font-family: "Open Sans", sans-serif; }
.location .combo > svg:last-child { color: #555; }
.lead { position: absolute; left: 3px; top: 2px; pointer-events: none; }
.tree { flex: 1; margin-right: 4px; padding-top: 1px; background: #fff; border: 1px solid #e3e3e3; border-top: 2px solid #828282; border-left: 2px solid #828282; }
.tree ul { padding: 0 0 1px 24px; }
.node { height: 21px; display: flex; align-items: center; padding-left: 9px; white-space: nowrap; }
.node span { padding: 0 2px; margin-left: 4px; line-height: 21px; }
.node.leaf { padding-left: 29px; }
.node.current span { background: #f0f0f0; }
.exp { width: 11px; height: 11px; margin-right: 9px; border: 1px solid #98a2b3; background: linear-gradient(#334a8c, #334a8c) center / 5px 1px no-repeat, linear-gradient(#334a8c, #334a8c) center / 1px 5px no-repeat, #f6f7fa; }
.exp.minus { background: linear-gradient(#334a8c, #334a8c) center / 5px 1px no-repeat, #f6f7fa; }

.dock { padding: 2px 0 0 4px; }
.dock button { flex-direction: column; justify-content: flex-start; width: 25px; height: 66px; padding-top: 4px; gap: 4px; border: 1px solid #a0a0a0; border-right: 0; border-radius: 5px 0 0 5px; background: #f4f4f4; color: #666; }
.dock span { writing-mode: vertical-rl; text-orientation: sideways; line-height: 20px; }

.status { height: 27px; display: flex; align-items: center; gap: 11px; padding: 2px 0 0 calc(100% - 352px); background: #f0f0f0; font-family: "Open Sans", "Noto Sans CJK SC", sans-serif; white-space: nowrap; }

/* message box */
.dialog { position: absolute; left: calc(50% - 132px); top: 443px; width: 275px; background: #fff; border: 1px solid #3a80bd; border-right-color: #d8d8d8; border-bottom-color: #d8d8d8; box-shadow: 0 3px 12px rgba(0, 0, 0, .35); font-family: "Open Sans", "Noto Sans CJK SC", sans-serif; }
.dlghead { height: 32px; display: flex; align-items: center; justify-content: space-between; padding: 0 5px 0 4px; }
.dlghead button { width: 32px; height: 32px; }
.dlghead svg { width: 12px; height: 12px; stroke: #222; overflow: visible; }
.dlgbody { height: 110px; padding: 35px 15px; font-size: 14px; white-space: nowrap; }
.dlgfoot { height: 65px; display: flex; align-items: center; justify-content: flex-end; padding: 0 26px 0 0; background: #f0f0f0; }
.dlgfoot button { width: 108px; height: 32px; border: 2px solid #0078d7; background: #e1e1e1; font-size: 14px; }
```
